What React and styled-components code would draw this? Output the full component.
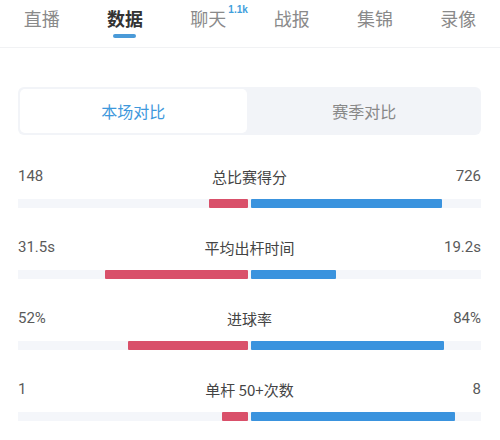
import React from "react";
import styled, { createGlobalStyle } from "styled-components";

const Global = createGlobalStyle`
  html, body { margin: 0; padding: 0; background: #ffffff; }
  body { font-family: "Noto Sans CJK SC", "Noto Sans", sans-serif; }
`;

const Page = styled.div`
  width: 500px;
  height: 440px;
  overflow: hidden;
  background: #fff;
`;

const TabBar = styled.div`
  display: grid;
  grid-template-columns: repeat(6, 1fr);
  height: 47px;
  border-bottom: 1px solid #f1f2f4;
`;

const Tab = styled.div`
  position: relative;
  display: flex;
  justify-content: center;
  padding-top: 5px;
  font-size: 18px;
  line-height: 26px;
  font-weight: ${(p) => (p.$active ? 700 : 400)};
  color: ${(p) => (p.$active ? "#333" : "#8a8a8a")};
`;

const TabLabel = styled.span`
  position: relative;
`;

const Badge = styled.sup`
  position: absolute;
  left: 100%;
  top: 0px;
  margin-left: 2px;
  font-family: "Liberation Sans", sans-serif;
  font-size: 10px;
  line-height: 10px;
  font-weight: 700;
  color: #3fa0dc;
`;

const Underline = styled.div`
  position: absolute;
  top: 34px;
  left: 50%;
  width: 23px;
  height: 4px;
  margin-left: -12px;
  border-radius: 2px;
  background: #4a9ad8;
`;

const Segmented = styled.div`
  display: grid;
  grid-template-columns: 1fr 1fr;
  margin: 39px 19px 0 18px;
  height: 48px;
  padding: 2px;
  box-sizing: border-box;
  background: #f2f4f8;
  border-radius: 6px;
`;

const Seg = styled.div`
  display: flex;
  align-items: center;
  justify-content: center;
  font-size: 16px;
  border-radius: 5px;
  color: ${(p) => (p.$active ? "#3d98dc" : "#888")};
  background: ${(p) => (p.$active ? "#ffffff" : "transparent")};
  margin-right: ${(p) => (p.$active ? "3px" : "0")};
`;

const Stats = styled.div`
  display: flex;
  flex-direction: column;
  gap: 28px;
  margin: 30px 19px 0 18px;
`;

const Row = styled.div`
  display: flex;
  flex-direction: column;
  gap: 12px;
`;

const LabelLine = styled.div`
  display: grid;
  grid-template-columns: 1fr auto 1fr;
  align-items: center;
  height: 22px;
`;

const Num = styled.span`
  font-family: "Roboto", "Noto Sans", sans-serif;
  font-size: 15px;
  color: #5a5a5a;
  text-align: ${(p) => p.$align};
`;

const Title = styled.span`
  font-size: 15px;
  color: #444;
`;

const Track = styled.div`
  display: grid;
  grid-template-columns: 1fr 1fr;
  column-gap: 3px;
  height: 9px;
  background: #f4f6fa;
`;

const Half = styled.div`
  display: flex;
  justify-content: ${(p) => (p.$side === "left" ? "flex-end" : "flex-start")};
`;

const Fill = styled.div`
  height: 100%;
  background: ${(p) => p.$color};
  border-radius: 1px;
`;

const tabs = ["直播", "数据", "聊天", "战报", "集锦", "录像"];

const stats = [
  { l: "148", r: "726", t: "总比赛得分", lp: 148 / 874, rp: 726 / 874 },
  { l: "31.5s", r: "19.2s", t: "平均出杆时间", lp: 0.62, rp: 0.37 },
  { l: "52%", r: "84%", t: "进球率", lp: 0.52, rp: 0.84 },
  { l: "1", r: "8", t: "单杆 50+次数", lp: 1 / 9, rp: 8 / 9 },
];

export default function App() {
  return (
    <Page>
      <Global />
      <TabBar>
        {tabs.map((t, i) => (
          <Tab key={t} $active={i === 1}>
            <TabLabel>
              {t}
              {i === 2 && <Badge>1.1k</Badge>}
            </TabLabel>
            {i === 1 && <Underline />}
          </Tab>
        ))}
      </TabBar>
      <Segmented>
        <Seg $active>本场对比</Seg>
        <Seg>赛季对比</Seg>
      </Segmented>
      <Stats>
        {stats.map((s) => (
          <Row key={s.t}>
            <LabelLine>
              <Num $align="left">{s.l}</Num>
              <Title>{s.t}</Title>
              <Num $align="right">{s.r}</Num>
            </LabelLine>
            <Track>
              <Half $side="left">
                <Fill $color="#d9506a" style={{ width: `${s.lp * 100}%` }} />
              </Half>
              <Half $side="right">
                <Fill $color="#3a93de" style={{ width: `${s.rp * 100}%` }} />
              </Half>
            </Track>
          </Row>
        ))}
      </Stats>
    </Page>
  );
}
